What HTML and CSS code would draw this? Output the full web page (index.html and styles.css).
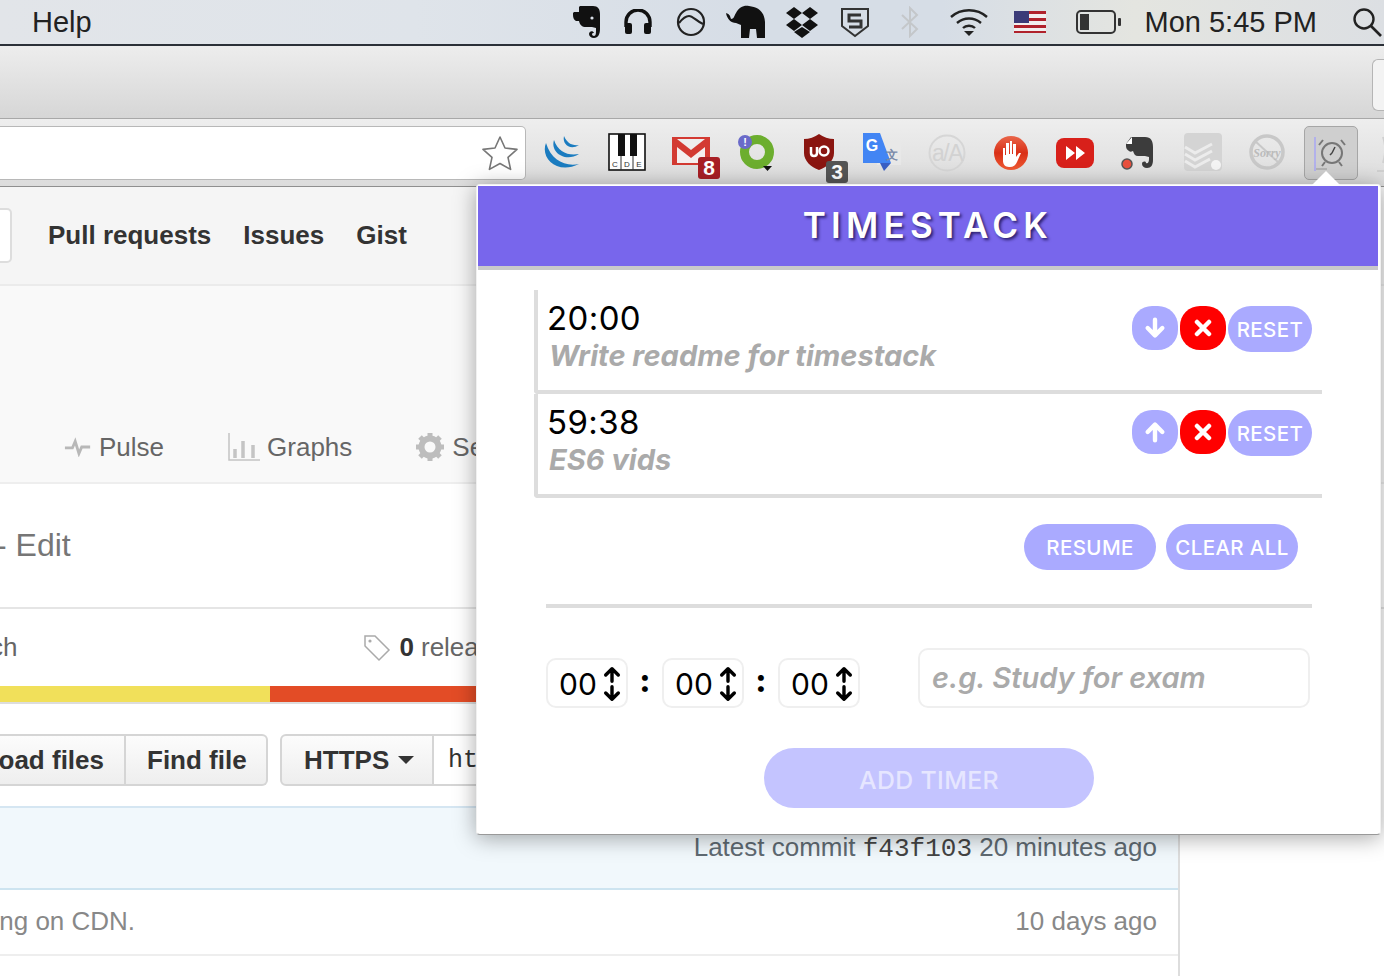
FILE: index.html
```html
<!DOCTYPE html>
<html lang="en">
<head>
<meta charset="utf-8">
<title>Timestack</title>
<link rel="stylesheet" href="styles.css">
</head>
<body>
<header class="menubar">
  <span class="menu-help">Help</span>
  <div class="status">
    <svg class="st" width="30" height="34" viewBox="0 0 30 34"><path fill="#111" d="M8 1h13c5 0 7 3 7 8v15c0 5-2 9-6 9-3 0-5-2-5-4 0-3 4-4 5-1-1 0-2 0-2 1 0 1 1 2 2 2 2 0 2-3 2-6v-2l-4-1h-6c-4 0-6-2-7-6H4c-2-1-3-3-3-6V8z"/><path fill="#d9dfe7" d="M1 7l6-6v6z"/><circle cx="20" cy="13" r="1.600" fill="#d9dfe7"/></svg>
    <svg class="st" width="30" height="26" viewBox="0 0 30 26"><path fill="none" stroke="#111" stroke-width="3.400" d="M3 18v-5a12 12 0 0 1 24 0v5"/><rect x="2" y="14" width="7" height="11" rx="2" fill="#111"/><rect x="21" y="14" width="7" height="11" rx="2" fill="#111"/></svg>
    <svg class="st" width="30" height="30" viewBox="0 0 30 30"><circle cx="15" cy="15" r="13" fill="none" stroke="#222" stroke-width="2.200"/><path fill="none" stroke="#222" stroke-width="2.200" d="M3 16c4-5 7-7 10-7 4 0 7 5 14 8"/></svg>
    <svg class="st" width="42" height="34" viewBox="0 0 42 34"><path fill="#111" d="M1 8c3 1 4 2 5 6 3 0 3-3 5-6 3-6 8-8 13-7 8 1 15 4 16 16v16h-8l-1-9h-6l-1 9h-8V20l-5-2C6 18 2 14 1 8z"/></svg>
    <svg class="st" width="34" height="32" viewBox="0 0 34 32"><path fill="#111" d="M9 1l8 6-8 6-8-6zM25 1l8 6-8 6-8-6zM9 13l8 6-8 6-8-6zM25 13l8 6-8 6-8-6zM17 21l8 5-8 6-8-6z"/></svg>
    <svg class="st" width="32" height="32" viewBox="0 0 32 32"><path fill="none" stroke="#333" stroke-width="2" d="M3 3h26v17l-13 10L3 20z"/><path fill="none" stroke="#333" stroke-width="3" d="M22 9H10v6h12v6H10"/></svg>
    <svg class="st" width="20" height="32" viewBox="0 0 20 32"><path fill="none" stroke="#c4c7ca" stroke-width="2" d="M2 9l15 14-7 7V2l7 7L2 23"/></svg>
    <svg class="st" width="40" height="28" viewBox="0 0 40 28"><g fill="none" stroke="#222" stroke-width="2.400"><path d="M2 9c10-9 26-9 36 0"/><path d="M8 15c7-6 17-6 24 0"/><path d="M14 20c3-3 9-3 12 0"/></g><path fill="#222" d="M15 23h10l-5 5z"/></svg>
    <div class="flag"><div class="canton"></div></div>
    <svg class="st" width="46" height="24" viewBox="0 0 46 24"><rect x="1" y="1" width="38" height="22" rx="4" fill="none" stroke="#333" stroke-width="2"/><rect x="4" y="4" width="9" height="16" fill="#333"/><rect x="42" y="8" width="3" height="8" rx="1" fill="#333"/></svg>
    <span class="clock">Mon 5:45 PM</span>
    <svg class="st search" width="30" height="30" viewBox="0 0 30 30"><circle cx="12" cy="12" r="9.500" fill="none" stroke="#222" stroke-width="2.400"/><path stroke="#222" stroke-width="2.600" d="M19 19l10 10"/></svg>
  </div>
</header>
<div class="tabstrip"><div class="newtab"></div></div>
<div class="toolbar">
  <div class="urlbar">
    <svg width="38" height="38" viewBox="0 0 38 38"><path fill="#fff" stroke="#777" stroke-width="1.600" stroke-linejoin="round" d="M19 3l5 11 12 1.400-9 8 2.600 12L19 29.500l-10.600 5.900L11 23.400l-9-8L14 14z"/></svg>
  </div>
  <div class="ext">
    <svg class="i1" width="38" height="36" viewBox="0 0 38 36"><g fill="#1b7cc0"><path d="M3 9C-3 24 14 41 36 30 22 33 8 26 3 9z"/><path d="M11 6C7 18 22 29 36 20 25 22 15 18 11 6z"/><path d="M21 2c-2 8 6 15 15 9-7 1-12-2-15-9z"/></g></svg>
    <svg class="i2" width="38" height="38" viewBox="0 0 38 38"><rect x="1" y="1" width="36" height="36" fill="#fff" stroke="#111" stroke-width="1.600"/><rect x="10" y="1" width="7" height="22" fill="#111"/><rect x="22" y="1" width="7" height="22" fill="#111"/><path stroke="#333" d="M13 23v14M25 23v14"/><text x="7" y="34" class="mini key">C</text><text x="19" y="34" class="mini key">D</text><text x="31" y="34" class="mini key">E</text></svg>
    <div class="badged i3">
      <svg width="38" height="30" viewBox="0 0 38 30"><rect width="38" height="28" fill="#d33a32"/><path fill="#f4eeee" d="M5 10l14 11 14-11v16H5z"/><path fill="#eee" d="M5 2h28L19 13z"/></svg>
      <span class="badge red">8</span>
    </div>
    <div class="badged i4">
      <svg width="38" height="37" viewBox="0 0 38 37"><circle cx="20" cy="18" r="12.500" fill="none" stroke="#6cae2e" stroke-width="9"/><circle cx="8" cy="8" r="7" fill="#6a6ac9"/><text x="8" y="12" class="mini">!</text><path d="M26 32h9l-4.500 5z" fill="#111"/></svg>
    </div>
    <div class="badged i5">
      <svg width="34" height="38" viewBox="0 0 34 38"><path fill="#8a1510" d="M17 1c4 3 10 5 15 5v14c0 8-7 14-15 17C9 34 2 28 2 20V6c5 0 11-2 15-5z"/><path fill="none" stroke="#fff" stroke-width="2.500" d="M9 14v6c0 4 6 4 6 0v-6"/><circle cx="22" cy="18" r="4.500" fill="none" stroke="#fff" stroke-width="2.500"/></svg>
      <span class="badge grey">3</span>
    </div>
    <svg class="i6" width="38" height="38" viewBox="0 0 38 38"><rect x="14" y="8" width="24" height="24" fill="#e8e8e8"/><path fill="#4285f4" d="M0 0h17l11 30H0z"/><path fill="#3a5fc4" d="M17 30h11l-7 8z"/><text x="9" y="18" class="mini g">G</text><text x="29" y="26" class="mini t">文</text></svg>
    <svg class="i7" width="38" height="38" viewBox="0 0 38 38"><circle cx="19" cy="19" r="17.500" fill="none" stroke="#d6d6d6" stroke-width="2"/><text x="19" y="27" class="mini aa">a/A</text></svg>
    <svg class="i8" width="36" height="36" viewBox="0 0 36 36"><defs><linearGradient id="hg" x1="0" y1="0" x2="0" y2="1"><stop offset="0" stop-color="#e9664a"/><stop offset=".5" stop-color="#d92f16"/><stop offset="1" stop-color="#ef5a34"/></linearGradient></defs><circle cx="18" cy="18" r="17" fill="url(#hg)"/><path fill="#fff" d="M10 13h2v7h1V8h3v11h1V6h2v13h1V9h3v13l3-4h2l-4 9c-1 3-4 5-7 5h-1c-4 0-6-3-6-6z"/></svg>
    <svg class="i9" width="38" height="30" viewBox="0 0 38 30"><rect width="38" height="30" rx="8" fill="#d8201a"/><path fill="#fff" d="M10 8l9 7-9 7zM20 8l9 7-9 7z"/></svg>
    <svg class="i10" width="34" height="34" viewBox="0 0 34 34"><path fill="#3c3c3c" d="M10 1h14c6 0 8 4 8 10v13c0 5-2 8-6 8-3 0-5-2-5-4 0-3 4-3 4-1 2 1 3-1 3-4v-2l-4-1h-7c-3 0-4-2-5-5-2 1-3 1-4 0-2-1-3-3-3-5V8z"/><path fill="#fff" d="M5 8l6-7v7z"/><circle cx="6" cy="28" r="5" fill="#e9503e" stroke="#555" stroke-width="1.500"/></svg>
    <svg class="i11" width="38" height="38" viewBox="0 0 38 38"><rect width="38" height="38" rx="4" fill="#d4d4d4"/><path fill="none" stroke="#ececec" stroke-width="3" d="M1 14l10 6 17-9M1 21l10 6 17-9M1 28l10 6 15-8"/><circle cx="32" cy="32" r="5" fill="#f4f4f4"/></svg>
    <svg class="i12" width="36" height="36" viewBox="0 0 36 36"><circle cx="18" cy="18" r="16" fill="none" stroke="#c8c8c8" stroke-width="3.500"/><path stroke="#c8c8c8" stroke-width="2" d="M6 7l24 22"/><text x="18" y="23" class="mini s">Sorry</text></svg>
    <div class="alarm-btn">
      <svg width="34" height="36" viewBox="0 0 34 36"><circle cx="18" cy="18" r="10" fill="none" stroke="#777" stroke-width="2"/><path stroke="#444" stroke-width="1.500" d="M18 18l3-6M18 18l-2 2"/><path stroke="#777" stroke-width="2" d="M9 5l-4 5M27 5l4 5M11 27l-3 4M25 27l3 4"/><path stroke="#a9a7f5" stroke-width="1.500" d="M1 2v34"/><path stroke="#aaa" stroke-width="1.500" d="M2 34h11"/></svg>
    </div>
    <svg class="clipicon" width="12" height="44" viewBox="0 0 12 44"><path fill="none" stroke="#d0d0d0" stroke-width="2" d="M6 6c3 8 3 16 0 26M0 40h12"/></svg>
  </div>
</div>
<main class="page">
  <nav class="ghnav">
    <span class="searchend"></span>
    <b>Pull requests</b><b>Issues</b><b>Gist</b>
  </nav>
  <section class="repohead">
    <div class="repotabs">
      <span class="rt pulse"><svg width="28" height="20" viewBox="0 0 30 20"><path fill="none" stroke="#b8b8b8" stroke-width="3" d="M1 11h8l3-7 4 13 3-7h9"/></svg>Pulse</span>
      <span class="rt graphs"><svg width="32" height="30" viewBox="0 0 32 30"><path fill="none" stroke="#c4c4c4" stroke-width="1.500" d="M1 1v27h31"/><path stroke="#c4c4c4" stroke-width="3.500" d="M7 26v-9M15 26V9M25 26V13"/></svg>Graphs</span>
      <span class="rt gear"><svg width="28" height="28" viewBox="0 0 28 28"><circle cx="14" cy="14" r="8.500" fill="none" stroke="#bdbdbd" stroke-width="6"/><path stroke="#bdbdbd" stroke-width="5" d="M14 0v5M14 23v5M0 14h5M23 14h5M4 4l4 4M20 20l4 4M4 24l4-4M20 8l4-4"/></svg>Settings</span>
    </div>
  </section>
  <section class="desc">- Edit</section>
  <section class="stats">
    <span class="branch">branch</span>
    <span class="rel"><svg width="28" height="28" viewBox="0 0 28 28"><path fill="none" stroke="#aaa" stroke-width="1.500" d="M2 2h10l14 14-10 10L2 12z"/><circle cx="7" cy="7" r="1.600" fill="#aaa"/></svg><b>0</b> releases</span>
  </section>
  <div class="langbar"><i class="yellow"></i><i class="orange"></i></div>
  <section class="actions">
    <div class="btngroup"><span class="btn first">Upload files</span><span class="btn last">Find file</span></div>
    <div class="btngroup clone"><span class="btn first">HTTPS<i class="caret"></i></span><span class="cloneurl">https://github.com</span></div>
  </section>
  <section class="filetable">
    <div class="commit"><span>Latest commit <code>f43f103</code> 20 minutes ago</span></div>
    <div class="filerow"><span class="msg">Hosting on CDN.</span><span>10 days ago</span></div>
  </section>
</main>
<aside class="popup">
  <div class="notch"></div>
  <h1 class="brand">TIMESTACK</h1>
  <div class="timers">
    <article class="timer">
      <div class="tinfo"><div class="time">20:00</div><div class="label">Write readme for timestack</div></div>
      <div class="tbtns">
        <button class="round"><svg width="22" height="22" viewBox="0 0 24 24"><path fill="none" stroke="#fff" stroke-width="4.800" stroke-linecap="round" stroke-linejoin="round" d="M12 3v16M4 12l8 8 8-8"/></svg></button>
        <button class="round danger"><svg width="18" height="18" viewBox="0 0 18 18"><path stroke="#fff" stroke-width="4.500" stroke-linecap="round" d="M3 3l12 12M15 3L3 15"/></svg></button>
        <button class="pill small">RESET</button>
      </div>
    </article>
    <article class="timer">
      <div class="tinfo"><div class="time">59:38</div><div class="label">ES6 vids</div></div>
      <div class="tbtns">
        <button class="round"><svg width="22" height="22" viewBox="0 0 24 24"><path fill="none" stroke="#fff" stroke-width="4.800" stroke-linecap="round" stroke-linejoin="round" d="M12 21V5M4 12l8-8 8 8"/></svg></button>
        <button class="round danger"><svg width="18" height="18" viewBox="0 0 18 18"><path stroke="#fff" stroke-width="4.500" stroke-linecap="round" d="M3 3l12 12M15 3L3 15"/></svg></button>
        <button class="pill small">RESET</button>
      </div>
    </article>
  </div>
  <div class="globals">
    <button class="pill resume">RESUME</button>
    <button class="pill clearall">CLEAR ALL</button>
  </div>
  <hr class="rule">
  <form class="addform">
    <div class="spin"><span>00</span><svg width="18" height="36" viewBox="0 0 20 38"><path fill="none" stroke="#000" stroke-width="3.800" stroke-linecap="round" stroke-linejoin="round" d="M10 2v14M3 9l7-7 7 7M10 22v14M3 29l7 7 7-7"/></svg></div>
    <span class="colon">:</span>
    <div class="spin"><span>00</span><svg width="18" height="36" viewBox="0 0 20 38"><path fill="none" stroke="#000" stroke-width="3.800" stroke-linecap="round" stroke-linejoin="round" d="M10 2v14M3 9l7-7 7 7M10 22v14M3 29l7 7 7-7"/></svg></div>
    <span class="colon">:</span>
    <div class="spin"><span>00</span><svg width="18" height="36" viewBox="0 0 20 38"><path fill="none" stroke="#000" stroke-width="3.800" stroke-linecap="round" stroke-linejoin="round" d="M10 2v14M3 9l7-7 7 7M10 22v14M3 29l7 7 7-7"/></svg></div>
    <div class="name">e.g. Study for exam</div>
  </form>
  <button class="pill add">ADD TIMER</button>
</aside>
</body>
</html>
```
FILE: styles.css
```css
* { box-sizing: border-box; }
html, body { margin: 0; padding: 0; }
body {
  width: 1384px; height: 976px; overflow: hidden; position: relative;
  font-family: "Liberation Sans", Arial, sans-serif; background: #fff; color: #333;
}
svg { display: block; flex: none; }

.menubar {
  height: 46px; border-bottom: 2px solid #2b3038;
  background: linear-gradient(90deg, #e2e5e9 0%, #dfe4ea 30%, #d6dde6 55%, #d6dde6 68%, #e4e5e0 82%, #dcdfe3 100%);
  display: flex; align-items: center; justify-content: space-between;
  padding-left: 32px; font-size: 29px; color: #222;
}
.status { display: flex; align-items: center; margin-right: 2px; }
.status > :nth-child(1) { margin-right: 21px; }
.status > :nth-child(2) { margin-right: 23px; }
.status > :nth-child(3) { margin-right: 19px; }
.status > :nth-child(4) { margin-right: 18px; }
.status > :nth-child(5) { margin-right: 20px; }
.status > :nth-child(6) { margin-right: 29px; }
.status > :nth-child(7) { margin-right: 29px; }
.status > :nth-child(8) { margin-right: 25px; }
.status > :nth-child(10) { margin-right: 23px; }
.flag {
  width: 32px; height: 22px; margin-right: 30px; position: relative;
  background: repeating-linear-gradient(180deg, #b0222c 0 3.400px, #f2eeee 3.400px 6.800px);
}
.canton { width: 15px; height: 12px; background: #3b3b78; }
.clock { margin-right: 35px; white-space: nowrap; }

.tabstrip {
  height: 73px; background: linear-gradient(180deg, #ededed, #d6d6d6);
  border-bottom: 1px solid #a8a8a8; display: flex; justify-content: flex-end; align-items: flex-start;
  padding-top: 13px;
}
.newtab { width: 12px; height: 52px; background: #f3f3f3; border: 1px solid #b5b5b5; border-right: 0; border-radius: 6px 0 0 6px; }

.toolbar {
  height: 68px; background: linear-gradient(180deg, #eeeeee, #dcdcdc);
  border-bottom: 1px solid #8f8f8f; display: flex; align-items: flex-start; padding-top: 7px;
}
.urlbar {
  width: 526px; height: 54px; background: #fff; border: 1px solid #b8b8b8; border-left: 0;
  border-radius: 0 5px 5px 0; display: flex; justify-content: flex-end; align-items: center; padding-right: 6px;
  flex: none;
}
.ext { display: flex; align-items: flex-start; position: relative; flex: 1; }
.ext > * { flex: none; }
.i1 { margin-left: 17px; margin-top: 8px; }
.i2 { margin-left: 27px; margin-top: 7px; }
.badged { position: relative; }
.i3 { margin-left: 26px; margin-top: 11px; }
.i4 { margin-left: 27px; margin-top: 8px; width: 38px; }
.i5 { margin-left: 27px; margin-top: 7px; }
.i6 { margin-left: 27px; margin-top: 7px; }
.i7 { margin-left: 27px; margin-top: 8px; }
.i8 { margin-left: 27px; margin-top: 9px; }
.i9 { margin-left: 27px; margin-top: 12px; }
.i10 { margin-left: 27px; margin-top: 10px; }
.i11 { margin-left: 29px; margin-top: 7px; }
.i12 { margin-left: 27px; margin-top: 8px; }
.alarm-btn {
  width: 54px; height: 54px; margin-left: 19px; border: 1px solid #a6a6a6; border-radius: 5px;
  background: #cfcfcf; display: flex; align-items: center; justify-content: center;
}
.clipicon { margin-left: 19px; margin-top: 5px; }
.badge {
  position: absolute; right: -10px; bottom: -12px; width: 22px; height: 22px; border-radius: 3px;
  color: #fff; font: bold 21px/22px "Liberation Sans", sans-serif; text-align: center;
}
.badge.red { background: #a81f25; }
.badge.grey { background: #555; right: -12px; bottom: -12px; }
.mini { font: bold 11px "Liberation Sans", sans-serif; fill: #fff; text-anchor: middle; }
.mini.key { font-size: 8px; font-weight: normal; fill: #333; }
.mini.g { font-size: 16px; }
.mini.t { font-size: 12px; fill: #7a8aa8; }
.mini.aa { font-size: 23px; font-weight: normal; fill: #d2d2d2; letter-spacing: -1.500px; }
.mini.s { font: italic bold 12px "Liberation Serif", serif; fill: #bbb; }

.page { height: 789px; overflow: hidden; }
.ghnav {
  height: 99px; border-bottom: 2px solid #ebebeb; display: flex; align-items: center;
  font-size: 26px; color: #333; background: #f5f5f5;
}
.searchend { width: 12px; height: 55px; background: #fff; border: 2px solid #ddd; border-left: 0; border-radius: 0 5px 5px 0; margin-right: 36px; }
.ghnav b { margin-right: 32px; }
.repohead { height: 198px; background: #f9f9f9; border-bottom: 2px solid #eee; display: flex; align-items: flex-end; }
.repotabs { display: flex; padding: 0 0 19px 64px; }
.rt { display: flex; align-items: center; font-size: 26px; color: #666; white-space: nowrap; height: 32px; margin-right: 64px; gap: 7px; }
.graphs { margin-right: 64px; gap: 7px; }
.gear { gap: 8px; }
.desc { height: 125px; border-bottom: 2px solid #e5e5e5; display: flex; align-items: center; padding-left: 0; font-size: 32px; color: #767676; white-space: nowrap; text-indent: -4px; }
.stats { height: 77px; display: flex; align-items: flex-start; padding-top: 23px; font-size: 26px; color: #666; white-space: nowrap; }
.branch { margin-left: -62px; }
.rel { display: flex; align-items: center; gap: 9px; margin-left: 345px; }
.rel b { color: #333; margin-right: -2px; }
.langbar { height: 18px; width: 1178px; display: flex; border-bottom: 2px solid #ddd; }
.yellow { width: 270px; background: #f1e05a; }
.orange { flex: 1; background: #e34c26; }
.actions { height: 102px; display: flex; padding-top: 30px; font-size: 26px; white-space: nowrap; }
.btngroup { display: flex; height: 52px; border: 2px solid #d5d5d5; border-left: 0; border-radius: 0 6px 6px 0; background: linear-gradient(180deg, #fcfcfc, #eeeeee); font-weight: bold; color: #333; align-items: center; margin-right: 12px; flex: none; }
.btn { display: flex; align-items: center; height: 100%; }
.btngroup .first { border-right: 2px solid #d5d5d5; width: 126px; justify-content: flex-end; padding-right: 20px; }
.btngroup .last { width: 140px; padding-left: 21px; }
.clone { border-left: 2px solid #d5d5d5; border-radius: 6px 0 0 6px; width: 400px; }
.clone .first { width: 152px; padding: 0 19px 0 22px; justify-content: flex-start; }
.caret { width: 0; height: 0; border: 8px solid transparent; border-top-color: #333; border-bottom: 0; margin-left: 9px; }
.cloneurl { background: #fff; height: 100%; flex: 1; display: flex; align-items: center; padding-left: 14px; font: 25px "Liberation Mono", monospace; color: #333; font-weight: normal; }
.filetable { width: 1180px; height: 170px; border-right: 2px solid #ddd; }
.commit { height: 84px; background: #f1f8fc; border-top: 2px solid #d5e6f2; border-bottom: 2px solid #cde4f0; display: flex; justify-content: flex-end; align-items: flex-start; padding: 24px 21px 0 0; font-size: 26px; color: #5f6a72; }
.commit code { font: 26px "Liberation Mono", monospace; color: #444; }
.filerow { height: 66px; border-bottom: 2px solid #eee; display: flex; justify-content: space-between; align-items: center; padding: 0 21px 2px 0; font-size: 26px; color: #888; white-space: nowrap; }
.msg { margin-left: -60px; }

.popup {
  position: absolute; left: 476px; top: 184px; width: 905px; height: 651px; background: #fff;
  border: 1px solid #f0f0f0; border-bottom-color: #999; border-radius: 4px; box-shadow: 0 3px 22px rgba(0,0,0,.35);
  padding: 1px 2px 1px 1px; font-family: Inter, "Noto Sans", sans-serif; display: flex; flex-direction: column;
}
.notch {
  position: absolute; left: 834px; top: -14px; width: 0; height: 0;
  border-left: 15px solid transparent; border-right: 15px solid transparent; border-bottom: 15px solid #fff;
}
.brand {
  margin: 0; height: 84px; flex: none; background: #7866ec; border-bottom: 4px solid #c9c9cb;
  color: #fff; font-size: 35px; font-weight: 600; letter-spacing: 5.200px; text-align: center; line-height: 78px;
  text-shadow: 2px 2px 3px rgba(20,10,70,.75);
}
.timers { margin: 20px 56px 0 56px; display: flex; flex-direction: column; }
.timer {
  height: 104px; border-left: 4px solid #ddd; border-bottom: 4px solid #ddd; border-bottom-left-radius: 4px;
  display: flex; justify-content: space-between; padding: 10px 10px 0 9px;
}
.time { font-size: 33px; line-height: 36px; color: #000; letter-spacing: .4px; }
.label { font-size: 29px; line-height: 38px; margin: 1px 0 0 2px; font-weight: 700; font-style: italic; color: #aaa; white-space: nowrap; }
.tbtns { display: flex; gap: 2px; align-items: flex-start; padding-top: 6px; }
button { font-family: inherit; border: 0; padding: 0; margin: 0; color: #fff; }
.round { width: 46px; height: 44px; border-radius: 20px; background: #aaaaff; display: flex; align-items: center; justify-content: center; }
.danger { background: #ff0000; }
.pill { background: #aaaaff; border-radius: 23px; height: 46px; font-size: 20.500px; font-weight: 500; letter-spacing: .4px; }
.small { width: 84px; }
.globals { display: flex; justify-content: flex-end; gap: 10px; margin: 26px 80px 0 0; }
.resume { width: 132px; }
.clearall { width: 132px; }
.rule { margin: 34px 66px 0 68px; height: 4px; border: 0; background: #ddd; flex: none; }
.addform { display: flex; align-items: flex-start; margin: 40px 0 0 68px; height: 60px; }
.spin { width: 82px; height: 50px; margin-top: 10px; border: 2px solid #efefef; border-radius: 10px; display: flex; align-items: center; padding: 1px 0 0 11px; gap: 6px; font-size: 30px; color: #000; }
.colon { width: 34px; text-align: center; font-size: 32px; line-height: 50px; margin-top: 8px; font-weight: 800; color: #000; }
.name { margin-left: 58px; width: 392px; height: 60px; border: 2px solid #efefef; border-radius: 10px; display: flex; align-items: center; padding-left: 12px; padding-bottom: 2px; font-size: 29px; font-weight: 600; font-style: italic; color: #aaa; }
.add { width: 330px; height: 60px; border-radius: 30px; margin: 40px 0 0 286px; padding-top: 3px; background: #c4c4ff; color: #e6e6ff; font-size: 24.800px; flex: none; }
```
